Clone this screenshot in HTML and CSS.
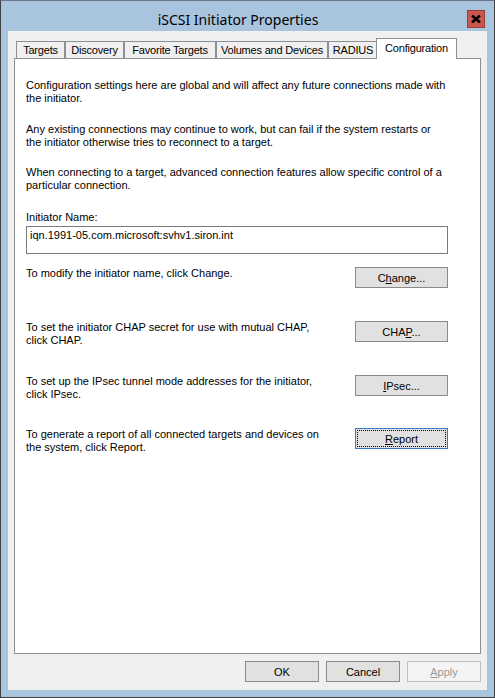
FILE: index.html
```html
<!DOCTYPE html>
<html lang="en">
<head>
<meta charset="utf-8">
<title>iSCSI Initiator Properties</title>
<link rel="stylesheet" href="styles.css">
</head>
<body>
<div class="window">
  <div class="titlebar">
    <div class="title">iSCSI Initiator Properties</div>
    <div class="close">
      <svg width="10" height="8" viewBox="0 0 10 8"><path d="M1 0.5 L9 7.5 M9 0.5 L1 7.5" stroke="#000" stroke-width="2.6" fill="none"/></svg>
    </div>
  </div>
  <div class="client">
    <div class="tabs">
      <div class="tab tab-targets">Targets</div>
      <div class="tab tab-discovery">Discovery</div>
      <div class="tab tab-favorite">Favorite Targets</div>
      <div class="tab tab-volumes">Volumes and Devices</div>
      <div class="tab tab-radius">RADIUS</div>
      <div class="tab tab-config active">Configuration</div>
    </div>
    <div class="panel">
      <p class="para para-1">Configuration settings here are global and will affect any future connections made with<br>the initiator.</p>
      <p class="para para-2">Any existing connections may continue to work, but can fail if the system restarts or<br>the initiator otherwise tries to reconnect to a target.</p>
      <p class="para para-3">When connecting to a target, advanced connection features allow specific control of a<br>particular connection.</p>
      <div class="label">Initiator Name:</div>
      <div class="textbox">iqn.1991-05.com.microsoft:svhv1.siron.int</div>
      <div class="row">
        <div class="row-text">To modify the initiator name, click Change.</div>
        <div class="btn btn-side">C<u>h</u>ange...</div>
      </div>
      <div class="row">
        <div class="row-text">To set the initiator CHAP secret for use with mutual CHAP,<br>click CHAP.</div>
        <div class="btn btn-side">CHA<u>P</u>...</div>
      </div>
      <div class="row row-short">
        <div class="row-text">To set up the IPsec tunnel mode addresses for the initiator,<br>click IPsec.</div>
        <div class="btn btn-side"><u>I</u>Psec...</div>
      </div>
      <div class="row">
        <div class="row-text">To generate a report of all connected targets and devices on<br>the system, click Report.</div>
        <div class="btn btn-side btn-focus"><u>R</u>eport</div>
      </div>
    </div>
    <div class="footer">
      <div class="btn btn-footer">OK</div>
      <div class="btn btn-footer">Cancel</div>
      <div class="btn btn-footer btn-disabled"><u>A</u>pply</div>
    </div>
  </div>
</div>
</body>
</html>
```

FILE: styles.css
```css
* { box-sizing: border-box; }

html, body {
  margin: 0;
  padding: 0;
  width: 495px;
  height: 698px;
  overflow: hidden;
}

body {
  font-family: "Liberation Sans", Arial, sans-serif;
  font-size: 11px;
  line-height: 13px;
  color: #000;
}

.window {
  width: 495px;
  height: 698px;
  background: #a9c4df;
  border: 1px solid #3f3f3f;
  border-top-color: #6b7786;
  padding: 0 7px 7px 7px;
  display: flex;
  flex-direction: column;
}

.titlebar {
  height: 30px;
  display: flex;
  align-items: flex-start;
  margin: 0 -7px;
}

.title {
  flex: 1;
  text-align: center;
  font-family: "Noto Sans", "Open Sans", sans-serif;
  font-size: 14px;
  line-height: 20px;
  padding-top: 9px;
  padding-left: 8px;
  color: #000;
}

.close {
  width: 18px;
  height: 18px;
  margin-top: 9px;
  margin-right: 9px;
  background: #c9574b;
  border: 1px solid #9a4034;
  display: flex;
  align-items: center;
  justify-content: center;
}

.close svg { display: block; }

.client {
  flex: 1;
  background: #f0f0f0;
  display: flex;
  flex-direction: column;
}

.tabs {
  display: flex;
  align-items: flex-end;
  margin-top: 7px;
  padding-left: 8px;
  height: 20px;
  position: relative;
  z-index: 1;
}

.tab {
  height: 17px;
  border: 1px solid #8e8f94;
  border-bottom: none;
  background: #f0f0f0;
  text-align: center;
  padding-top: 2px;
  white-space: nowrap;
  letter-spacing: -0.2px;
}

.tab-targets { width: 49px; }
.tab-discovery { width: 59px; }
.tab-favorite { width: 92px; }
.tab-volumes { width: 112px; }
.tab-radius { width: 50px; }

.tab.active {
  width: 81px;
  height: 21px;
  margin-left: -2px;
  margin-bottom: -1px;
  background: #fff;
  padding-top: 3px;
  position: relative;
  z-index: 2;
}

.panel {
  flex: 1;
  margin: 0 6px;
  background: #fff;
  border: 1px solid #8e8f94;
  padding: 20px 32px 0 11px;
}

.para { margin: 0; }
.para-1 { margin-bottom: 18px; }
.para-2 { margin-bottom: 17px; }
.para-3 { margin-bottom: 19px; }

.label { margin-bottom: 2px; }

.textbox {
  height: 28px;
  border: 1px solid #7a7a7a;
  padding: 2px 3px;
  white-space: nowrap;
}

.row {
  display: flex;
  justify-content: space-between;
  align-items: flex-start;
  height: 54px;
}

.textbox + .row { margin-top: 13px; }
.row-short { height: 53px; }

.btn {
  height: 21px;
  border: 1px solid #8a8a8a;
  background: #e1e1e1;
  text-align: center;
  padding-top: 4px;
  white-space: nowrap;
  position: relative;
}

.btn-side { width: 93px; }

.btn-focus { border-color: #3a78c4; }
.btn-focus::after {
  content: "";
  position: absolute;
  top: 1px;
  left: 1px;
  right: 1px;
  bottom: 1px;
  border: 1px dotted #000;
}

.footer {
  display: flex;
  justify-content: flex-end;
  gap: 7px;
  padding: 7px 6px 8px 0;
}

.btn-footer { width: 74px; }

.btn-disabled {
  background: #f4f4f4;
  border-color: #bfbfbf;
  color: #9a9a9a;
}
```
